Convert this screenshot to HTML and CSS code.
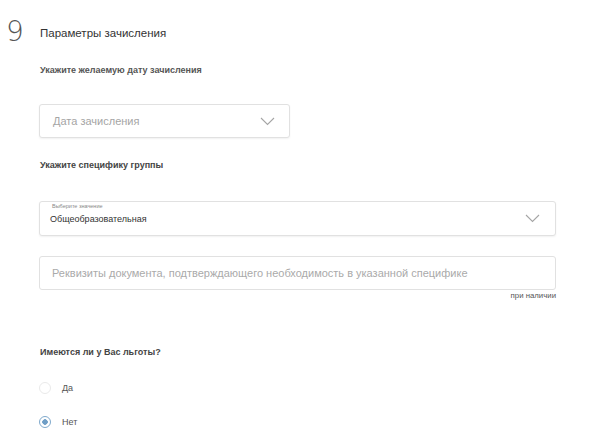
FILE: index.html
```html
<!DOCTYPE html>
<html lang="ru">
<head>
  <meta charset="UTF-8">
  <title>Параметры зачисления</title>
  <link rel="stylesheet" href="styles.css">
</head>
<body>
  <div class="step">
    <div class="step-num">9</div>
    <div class="step-body">
      <h2 class="step-title">Параметры зачисления</h2>

      <!-- дата -->
      <div class="label label-date">Укажите желаемую дату зачисления</div>
      <div class="field field-date">
        <span class="placeholder">Дата зачисления</span>
        <svg class="chevron" width="15" height="9" viewBox="0 0 15 9"><path d="M1 1l6.5 6.5L14 1" fill="none" stroke="#a5a5a5" stroke-width="1.1"/></svg>
      </div>

      <!-- специфика -->
      <div class="label">Укажите специфику группы</div>
      <div class="field field-select">
        <span class="mini-label">Выберите значение</span>
        <span class="value">Общеобразовательная</span>
        <svg class="chevron" width="15" height="9" viewBox="0 0 15 9"><path d="M1 1l6.5 6.5L14 1" fill="none" stroke="#a5a5a5" stroke-width="1.1"/></svg>
      </div>

      <div class="field field-input">
        <span class="placeholder">Реквизиты документа, подтверждающего необходимость в указанной специфике</span>
      </div>
      <div class="hint">при наличии</div>

      <!-- льготы -->
      <div class="label label-q">Имеются ли у Вас льготы?</div>
      <div class="radios">
        <label class="radio"><span class="circle"></span>Да</label>
        <label class="radio"><span class="circle checked"></span>Нет</label>
      </div>
    </div>
  </div>
</body>
</html>
```

FILE: styles.css
```css
body {
  margin: 0;
  font-family: "Liberation Sans", Arial, sans-serif;
  background-color: #fff;
  color: #333;
}
.step {
  display: flex;
  padding: 16px 0 0 6px;
}
.step-num {
  width: 33px;
  font-family: "DejaVu Sans", sans-serif;
  font-weight: 200;
  font-size: 28px;
  line-height: 30px;
  color: #555;
  padding-top: 1px;
}
.step-body {
  width: 517px;
}
.step-title {
  margin: 10px 0 0 1px;
  font-size: 11.5px;
  font-weight: normal;
  color: #333;
  line-height: 14px;
}
.label {
  margin: 24px 0 0 1px;
  font-size: 9px;
  font-weight: bold;
  color: #444;
  line-height: 12px;
}
.label-date {
  color: #555;
}
.field {
  position: relative;
  box-sizing: border-box;
  border: 1px solid #e1e1e1;
  border-radius: 3px;
  background: #fff;
  box-shadow: 0 1px 2px rgba(0,0,0,0.06);
  display: flex;
  align-items: center;
}
.field-date {
  width: 251px;
  height: 34px;
  margin-top: 28px;
  padding: 0 13px;
  margin-bottom: 21px;
}
.field-date + .label {
  margin-top: 0;
}
.placeholder {
  font-size: 11px;
  color: #a5a5a5;
  flex: 1;
}
.chevron {
  margin-right: 1px;
}
.field-select {
  height: 35px;
  margin-top: 30px;
  padding: 0 14px 0 10px;
}
.mini-label {
  position: absolute;
  left: 12px;
  top: 1px;
  font-size: 5.5px;
  color: #888;
}
.value {
  flex: 1;
  font-size: 9px;
  color: #333;
  padding-top: 1px;
}
.field-input {
  height: 34px;
  margin-top: 20px;
  padding: 0 12px;
  box-shadow: none;
}
.field-input .placeholder {
  font-size: 11px;
  color: #aaa;
}
.hint {
  text-align: right;
  font-size: 7.8px;
  color: #555;
  margin-top: 1px;
}
.label-q {
  margin-top: 46px;
}
.radios {
  margin-top: 24px;
  display: flex;
  flex-direction: column;
  gap: 22px;
}
.radio {
  display: flex;
  align-items: center;
  font-size: 9px;
  color: #555;
  height: 12px;
}
.circle {
  box-sizing: border-box;
  width: 12px;
  height: 12px;
  border-radius: 50%;
  border: 1px solid #eaeaea;
  margin-right: 11px;
}
.circle.checked {
  border: 1.5px solid #7fa9cc;
  background: radial-gradient(circle, #6f9ec6 0 2.5px, #fff 3px);
}
```
